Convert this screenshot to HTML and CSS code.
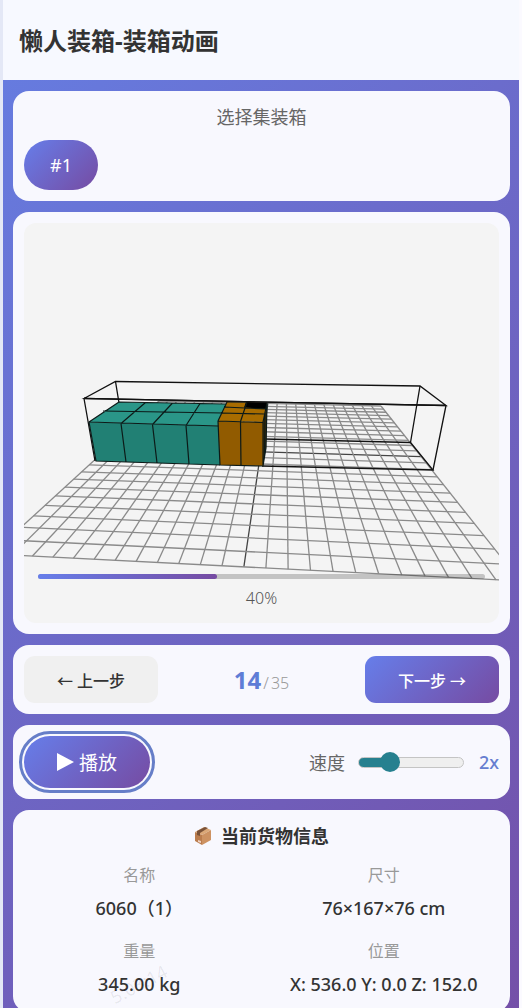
FILE: index.html
```html
<!DOCTYPE html>
<html lang="zh-CN">
<head>
  <meta charset="UTF-8">
  <meta name="viewport" content="width=device-width, initial-scale=1">
  <title>懒人装箱-装箱动画</title>

  <link rel="stylesheet" href="styles.css">
</head>

<body>

  <header class="header">
    <h1>懒人装箱-装箱动画</h1>
  </header>

  <main class="container">

    <section class="card selector">
      <h2 class="selector-title">选择集装箱</h2>
      <button class="container-btn" type="button">#1</button>
    </section>

    <section class="card">
      <div class="viewer">
        <svg class="scene" viewBox="0 1 475 400" preserveAspectRatio="xMidYMid slice" role="img" aria-label="装箱动画">
          <g id="grid"></g>

          <!-- container frame -->
          <g class="frame">
            <path d="M60 176.500L91.500 159.500L396 164L422 183.500Z"/>
            <path d="M60 176.500L71 239M91.500 159.500L95 181M396 164L386.500 220.500M422 183.500L409 248"/>
            <path d="M240 217L386.500 220.500L409 248L238 244"/>
          </g>

          <!-- teal boxes -->
          <path fill="#2a9688" d="M65 200L95 180L202 182L195 204Z"/>
          <path fill="#218074" d="M65 200L195 204L196 243L72 239Z"/>
          <path class="edge" d="M65 200L195 204M79 189L199 191M95 180L202 182M65 200L95 180M97 201.500L121.500 180.500M128.500 202.500L148.500 181M162 203.500L176 181.500"/>
          <path class="edge" d="M65 200L72 239L196 243M97 201.500L102 240M128.500 202.500L133 241M162 203.500L165 242"/>

          <!-- orange boxes -->
          <path fill="#a86c00" d="M194 199L203 180L243 181L239 200Z"/>
          <path fill="#915b00" d="M194 199L239 200L239 244L196 243Z"/>
          <path fill="#4d3200" d="M239 200L243 181L242 226L239 244Z"/>
          <path fill="#000" d="M222 180L243 180.500L242 187L220 185.500Z"/>
          <path class="edge" d="M194 199L239 200.500M200 185L242 187M197 191L241 192M194 199L203 180L222 180M216.500 199.500L223 180M239 200L243 181M194 199L196 243L239 244L239 200M216.500 199.500L217 243.500M241 190L240.500 235M239 244L242 226L243 181"/>
          <path class="frame" d="M60 176.500L422 183.500"/>
        </svg>

        <div class="progress">
          <div class="progress-bar">
            <div class="progress-fill" style="width:40%"></div>
          </div>
          <div class="progress-text">40%</div>
        </div>
      </div>
    </section>

    <section class="card row">
      <button class="step-btn" type="button">← 上一步</button>
      <div class="counter"><b>14</b><span>/</span><span>35</span></div>
      <button class="step-btn next" type="button">下一步 →</button>
    </section>

    <section class="card row">
      <button class="play-btn" type="button">
        <svg width="17" height="18" viewBox="0 0 17 18" aria-hidden="true"><path fill="#fff" d="M0 0L17 9L0 18Z"/></svg>
        播放
      </button>
      <div class="speed">
        <label for="speed">速度</label>
        <input type="range" id="speed" min="1" max="5" step="1" value="2">
        <output for="speed">2x</output>
      </div>
    </section>

    <section class="card info">
      <h2 class="info-title">
        <svg width="18" height="20" viewBox="0 0 18 20" aria-hidden="true">
          <path fill="#dba878" d="M1 6L10 1L17 4L8 9Z"/>
          <path fill="#bb7d4e" d="M1 6L8 9L8 19L1 15Z"/>
          <path fill="#cd9262" d="M8 9L17 4L17 14L8 19Z"/>
          <path fill="#7a5238" d="M3 5L11 1L14 2L6 7L6 10L3 9Z"/>
          <path fill="#f0d3c4" d="M4 14L7 15L7 17L4 16Z"/>
        </svg>
        当前货物信息
      </h2>
      <dl class="info-grid">
        <div><dt>名称</dt><dd>6060（1）</dd></div>
        <div><dt>尺寸</dt><dd>76×167×76 cm</dd></div>
        <div><dt>重量</dt><dd>345.00 kg</dd></div>
        <div><dt>位置</dt><dd>X: 536.0 Y: 0.0 Z: 152.0</dd></div>
      </dl>
      <span class="watermark">5:03:14</span>
    </section>

  </main>

  <script src="grid.js"></script>

</body>
</html>
```
FILE: styles.css
```css
* {
  box-sizing: border-box;
  margin: 0;
  padding: 0;
}

body {
  font-family: "Noto Sans", "Noto Sans CJK SC", sans-serif;
  color: #333;
  min-height: 100vh;
  background: #fbfbff;
  border-left: 3px solid #e4e8f6;
  border-right: 3px solid #fbfaff;
}

button, input {
  font-family: inherit;
}

button {
  border: none;
  cursor: pointer;
}

.header {
  display: flex;
  align-items: center;
  height: 80px;
  padding: 2px 16px 0;
  background: #f7f9ff;
}

.header h1 {
  font-size: 24px;
  line-height: 32px;
}

.container {
  display: flex;
  flex-direction: column;
  gap: 11px;
  padding: 11px 9px 11px 10px;
  background: linear-gradient(135deg, #667bdf 0%, #764ba2 110%);
}

.card {
  position: relative;
  background: #f8f8fe;
  border-radius: 16px;
  padding: 11px;
}

.row {
  display: flex;
  align-items: center;
  justify-content: space-between;
}

.selector-title {
  font-size: 18px;
  font-weight: 400;
  line-height: 30px;
  margin-bottom: 8px;
  text-align: center;
  color: #666;
}

.container-btn {
  display: block;
  width: 74px;
  height: 50px;
  border-radius: 25px;
  font-size: 18px;
  color: white;
  background: linear-gradient(135deg, #667eea, #764ba2);
}

/* 3D view */
.viewer {
  position: relative;
  height: 400px;
  border-radius: 12px;
  overflow: hidden;
  background: #f4f4f4;
}

.scene {
  display: block;
  width: 100%;
  height: 100%;
}

#grid line {
  stroke: #8a8a8a;
  stroke-width: 1.3;
}

#grid .axis {
  stroke: #444;
}

.frame {
  fill: none;
  stroke: #111;
  stroke-width: 1.3;
}

.edge {
  fill: none;
  stroke: #0c1a18;
  stroke-width: 1.2;
}

.progress {
  position: absolute;
  left: 14px;
  right: 14px;
  bottom: 13px;
}

.progress-bar {
  height: 5px;
  border-radius: 3px;
  background: rgba(0, 0, 0, 0.2);
}

.progress-fill {
  height: 100%;
  border-radius: 3px;
  background: linear-gradient(90deg, #667eea, #764ba2);
}

.progress-text {
  margin-top: 7px;
  font-size: 16px;
  font-weight: 300;
  line-height: 24px;
  text-align: center;
  color: #555;
}

/* controls */
.step-btn {
  width: 134px;
  height: 47px;
  border-radius: 11px;
  font-size: 16px;
  font-weight: 500;
  color: #333;
  background: #f0f0f0;
}

.step-btn.next {
  color: white;
  background: linear-gradient(135deg, #667eea, #764ba2);
}

.counter {
  padding-top: 4px;
  font-size: 16px;
  font-weight: 300;
  line-height: 32px;
  color: #999;
}

.counter b {
  font-size: 24px;
  font-weight: 700;
  color: #5f7dd6;
}

.counter span {
  margin-left: 2px;
}

.play-btn {
  display: flex;
  align-items: center;
  justify-content: center;
  gap: 5px;
  width: 126px;
  height: 52px;
  border-radius: 26px;
  font-size: 19px;
  color: white;
  background: linear-gradient(135deg, #667eea, #764ba2);
  outline: 3px solid #667ec8;
  outline-offset: 2px;
}

.speed {
  display: flex;
  align-items: center;
  font-size: 18px;
  color: #666;
}

.speed input {
  -webkit-appearance: none;
  appearance: none;
  width: 106px;
  height: 20px;
  margin: 0 15px 0 13px;
  background: none;
}

.speed input::-webkit-slider-runnable-track {
  height: 11px;
  border: 1px solid #c4c4c4;
  border-radius: 6px;
  background: linear-gradient(90deg, #26808f 30%, #efefef 30%) border-box;
}

.speed input::-webkit-slider-thumb {
  -webkit-appearance: none;
  width: 20px;
  height: 20px;
  margin-top: -6px;
  border-radius: 50%;
  background: #26808f;
}

.speed output {
  font-weight: 500;
  color: #667ed0;
}

/* cargo info */
.info-title {
  display: flex;
  align-items: center;
  justify-content: center;
  gap: 9px;
  margin-bottom: 8px;
  font-size: 18px;
  line-height: 30px;
}

.info-grid {
  display: grid;
  grid-template-columns: 1fr 1fr;
  gap: 10px 14px;
  text-align: center;
}

.info-grid dt {
  font-size: 16px;
  line-height: 32px;
  color: #999;
}

.info-grid dd {
  font-size: 18px;
  font-weight: 500;
  line-height: 34px;
}

.watermark {
  position: absolute;
  left: 95px;
  bottom: 18px;
  font-size: 18px;
  line-height: 20px;
  color: rgba(0, 0, 0, 0.08);
  transform: rotate(-28deg);
}
```
FILE: grid.js
```js
const DIVISIONS = 24;

// floor corners on screen: far left, far right, near right, near left
const corners = [[135, 179], [357, 184], [496, 359], [-32, 332]];

// maps a point of the unit square onto the four corners, in perspective
function project(u, v) {
  const [[x0, y0], [x1, y1], [x2, y2], [x3, y3]] = corners;
  const sx = x0 - x1 + x2 - x3, sy = y0 - y1 + y2 - y3;
  const dx1 = x1 - x2, dy1 = y1 - y2;
  const dx2 = x3 - x2, dy2 = y3 - y2;
  const det = dx1 * dy2 - dx2 * dy1;
  const g = (sx * dy2 - dx2 * sy) / det;
  const h = (dx1 * sy - sx * dy1) / det;
  const w = g * u + h * v + 1;
  return [
    ((x1 - x0 + g * x1) * u + (x3 - x0 + h * x3) * v + x0) / w,
    ((y1 - y0 + g * y1) * u + (y3 - y0 + h * y3) * v + y0) / w
  ];
}

function drawLine(a, b, axis) {
  const line = document.createElementNS("http://www.w3.org/2000/svg", "line");
  line.setAttribute("x1", a[0]);
  line.setAttribute("y1", a[1]);
  line.setAttribute("x2", b[0]);
  line.setAttribute("y2", b[1]);
  if (axis) line.setAttribute("class", "axis");
  document.getElementById("grid").appendChild(line);
}

for (let i = 0; i <= DIVISIONS; i++) {
  const t = i / DIVISIONS;
  const axis = i === DIVISIONS / 2;
  drawLine(project(t, 0), project(t, 1), axis);
  drawLine(project(0, t), project(1, t), axis);
}
```
